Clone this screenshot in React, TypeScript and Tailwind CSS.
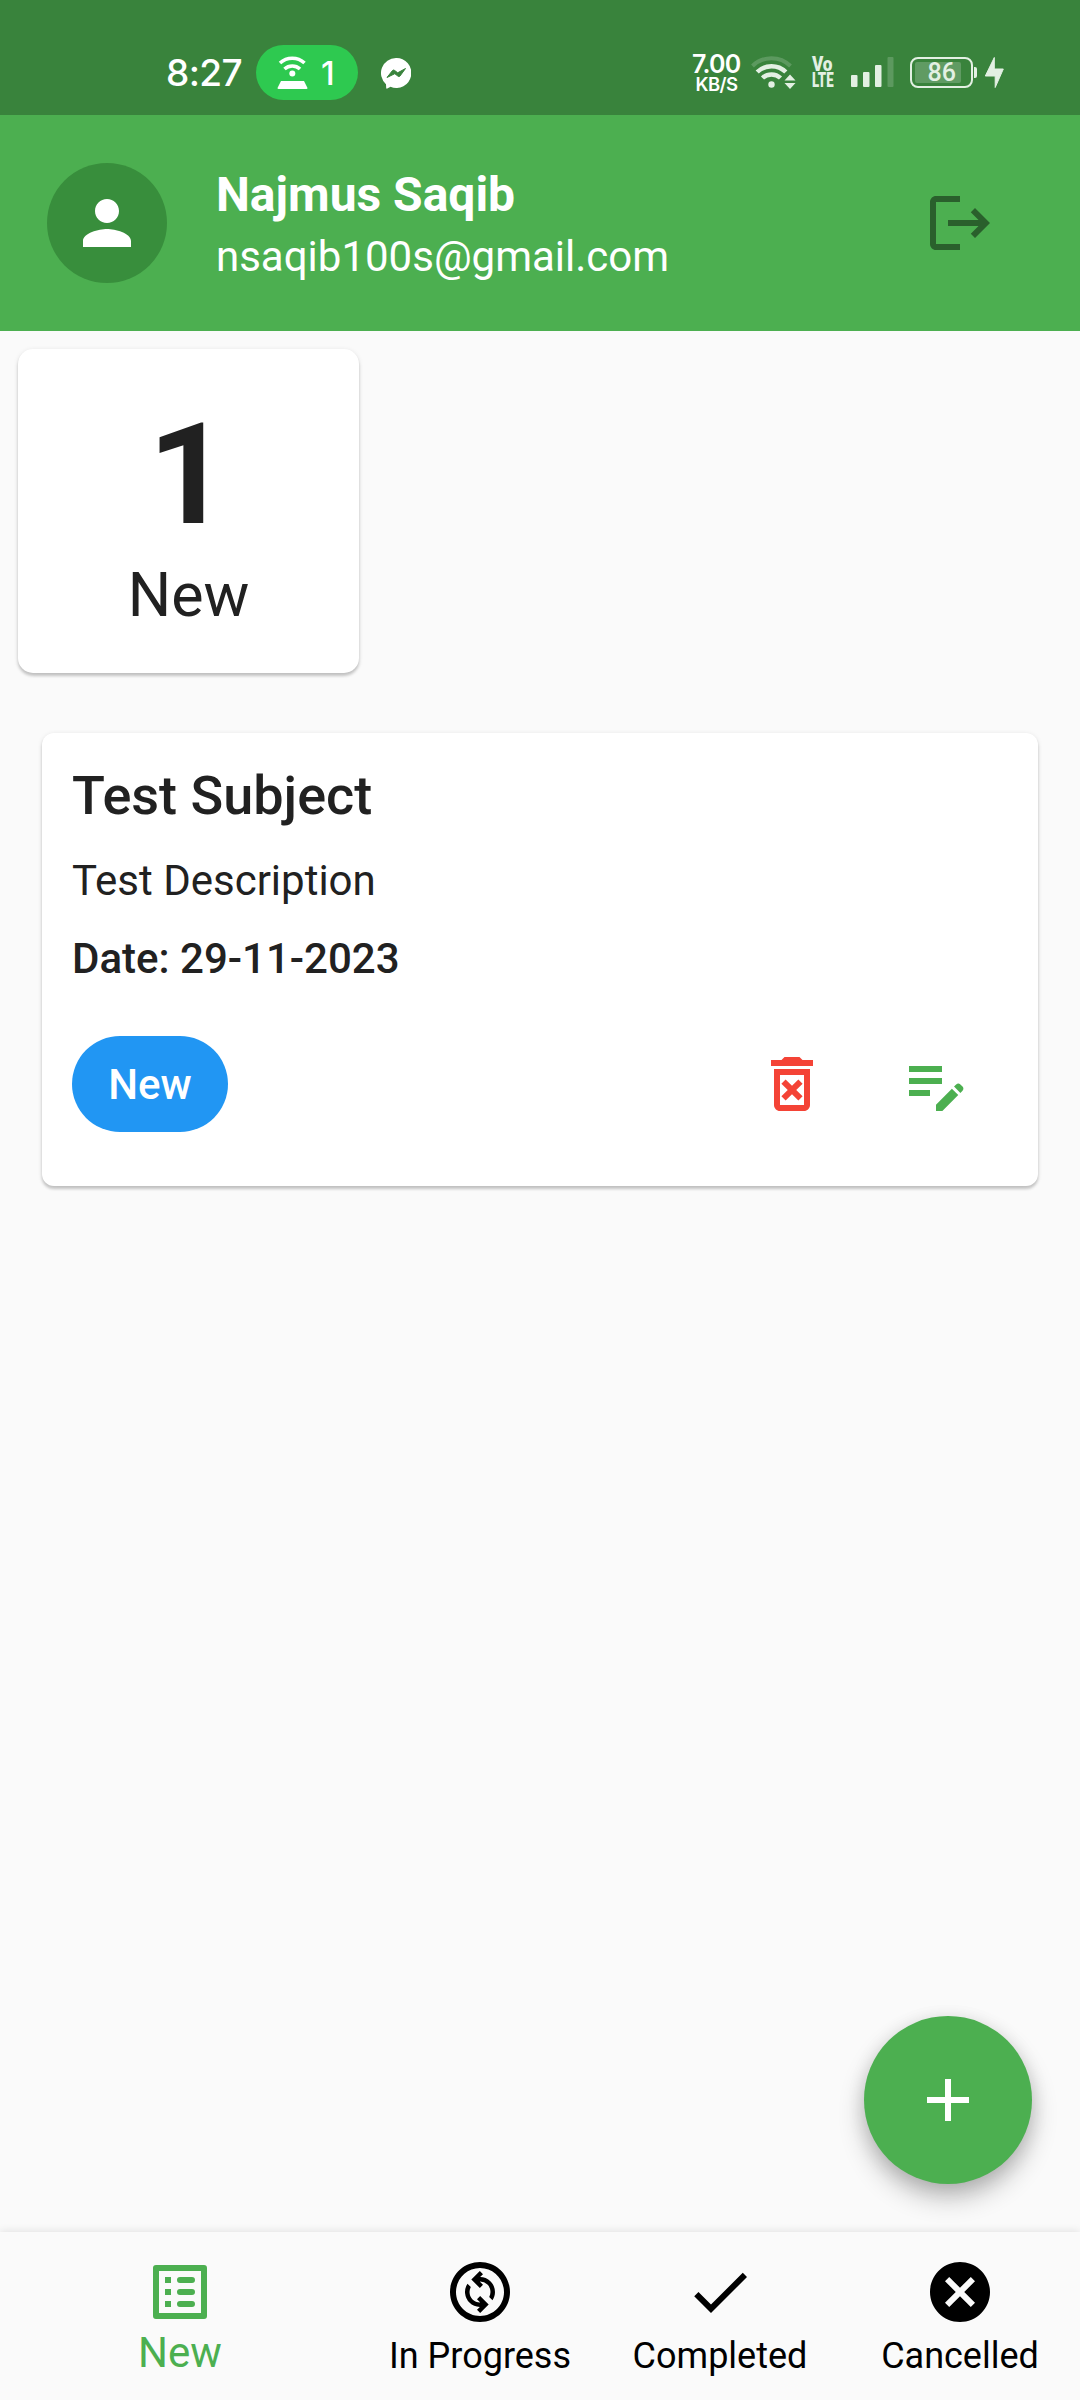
import type { ReactNode } from "react";
import {
  MdAdd,
  MdCancel,
  MdCheck,
  MdEditNote,
  MdLogout,
  MdOutlineChangeCircle,
  MdOutlineDeleteForever,
  MdPerson,
} from "react-icons/md";

function HotspotIcon() {
  return (
    <svg width="32" height="34" viewBox="0 0 32 34" fill="none" className="shrink-0">
      <path d="M3 8a18 18 0 0 1 24.500 0" stroke="white" strokeWidth="3.600" />
      <path d="M7.500 14a11.500 11.500 0 0 1 15.500 0" stroke="white" strokeWidth="3.600" />
      <circle cx="15.300" cy="18.500" r="3" fill="white" />
      <path d="M4 26h23l3.500 7a1 1 0 0 1-1 1h-28a1 1 0 0 1-1-1z" fill="white" />
    </svg>
  );
}

function MessengerIcon() {
  return (
    <svg width="30" height="31" viewBox="0 0 30 31" className="shrink-0">
      <path d="M15 0a15 15 0 1 1-5.500 28.800L6.300 30.600Q5.300 31 5.200 29.800L5 26.200A15 15 0 0 1 15 0z" fill="white" />
      <path d="M6 19.500l5.500-7q1-1 2.200 0l3 2.300L24.500 10.500l-5.500 7.500q-1 1-2.200 0l-3-2.300z" fill="#39833c" stroke="#39833c" strokeLinejoin="round" />
    </svg>
  );
}

function WifiIcon() {
  return (
    <svg width="45" height="34" viewBox="0 0 45 34" fill="none" className="shrink-0">
      <path d="M1.500 11a27 27 0 0 1 38 0" stroke="white" strokeOpacity=".18" strokeWidth="4" />
      <path d="M6.200 17a20.500 20.500 0 0 1 28.600 0" stroke="#e3f0e3" strokeWidth="4.500" />
      <path d="M11.500 23a13 13 0 0 1 18 0" stroke="#e3f0e3" strokeWidth="4.500" />
      <circle cx="20.500" cy="29.500" r="3.200" fill="#e3f0e3" />
      <path d="M39 19.500l5.500 6h-11zM39 34l5.500-6h-11z" fill="#e3f0e3" />
    </svg>
  );
}

function SignalIcon() {
  return (
    <svg width="43" height="30" viewBox="0 0 43 30" fill="#e3f0e3" className="shrink-0">
      <rect x="0" y="18" width="6.500" height="12" rx="1" />
      <rect x="12" y="15" width="6.500" height="15" rx="1" />
      <rect x="24" y="8" width="6.500" height="22" rx="1" />
      <rect x="36.500" y="0" width="6" height="30" rx="1" fill="white" fillOpacity=".18" />
    </svg>
  );
}

function Battery() {
  return (
    <div className="flex items-center">
      <div className="flex h-[31px] w-[63px] rounded-[8px] border-2 border-[#e3f0e3] p-[3px]">
        <div className="flex h-[21px] w-[46px] justify-end rounded-[2px] bg-white/20 pr-[5px] font-['Roboto',sans-serif] text-[25px] leading-[21px] font-medium text-[#e3f0e3]">
          86
        </div>
      </div>
      <div className="ml-px h-[11px] w-[3px] rounded-r-[2px] bg-[#e3f0e3]" />
      <svg width="19" height="31" viewBox="0 0 19 31" className="ml-[8px]">
        <path d="M9.300 0.500v11.500h9L10.200 30.500V19H.300z" fill="#e3f0e3" stroke="#e3f0e3" strokeLinejoin="round" />
      </svg>
    </div>
  );
}

function StatusBar() {
  return (
    <div className="flex h-[115px] shrink-0 items-start bg-[#39833c] text-white">
      <div className="mt-[50px] ml-[166px] w-[90px] font-['Inter',sans-serif] text-[37px] leading-[46px] font-[450] tracking-[-0.6px]">8:27</div>
      <div className="mt-[45px] flex h-[55px] w-[102px] items-start rounded-full bg-[#2ec950] pt-[10px] pl-[21px]">
        <HotspotIcon />
        <span className="mt-[-2px] ml-[12px] font-['Inter',sans-serif] text-[33px] leading-[40px] font-[450]">1</span>
      </div>
      <div className="mt-[58px] ml-[23px]">
        <MessengerIcon />
      </div>
      <div className="mt-[52px] ml-[281px] w-[48px] text-center font-['Inter',sans-serif] font-semibold">
        <div className="text-[25px] leading-[24px] tracking-[-0.8px]">7.00</div>
        <div className="pl-px text-[18.500px] leading-[16px] tracking-[-0.5px]">KB/S</div>
      </div>
      <div className="mt-[55px] ml-[11px]">
        <WifiIcon />
      </div>
      <div className="mt-[56px] ml-[16px] w-[24px] font-['Roboto',sans-serif] text-[20px] leading-[16px] font-black text-[#e3f0e3]">
        <div className="origin-left scale-x-[.86] tracking-[-0.3px]">Vo</div>
        <div className="origin-left scale-x-[.66]">LTE</div>
      </div>
      <div className="mt-[57px] ml-[15px]">
        <SignalIcon />
      </div>
      <div className="mt-[57px] ml-[16px]">
        <Battery />
      </div>
    </div>
  );
}

function ProfileHeader() {
  return (
    <header className="flex h-[216px] shrink-0 items-center bg-[#4caf50] pr-[84px] pl-[47px] text-white">
      <div className="flex size-[120px] items-center justify-center rounded-full bg-[#388e3c]">
        <MdPerson size={72} />
      </div>
      <div className="ml-[49px] pt-[6px]">
        <h1 className="text-[48px] leading-[60px] font-bold">Najmus Saqib</h1>
        <p className="mt-[2px] text-[42px] leading-[60px]">nsaqib100s@gmail.com</p>
      </div>
      <MdLogout size={72} className="ml-auto text-[#2a602c]" />
    </header>
  );
}

function SummaryCard({ count, label }: { count: number; label: string }) {
  return (
    <section className="mt-[18px] ml-[18px] h-[324px] w-[341px] rounded-[15px] bg-white pt-[42px] text-center shadow-[0_3px_3px_rgba(0,0,0,.18),0_1px_5px_rgba(0,0,0,.1)]">
      <div className="text-[141px] leading-[168px] font-bold">{count}</div>
      <div className="text-[61px] leading-[72px]">{label}</div>
    </section>
  );
}

function TaskCard() {
  return (
    <section className="mx-[42px] mt-[60px] h-[453px] rounded-[12px] bg-white pt-[31px] pr-[66px] pl-[30px] shadow-[0_3px_3px_rgba(0,0,0,.18),0_1px_5px_rgba(0,0,0,.1)]">
      <h2 className="text-[54px] leading-[64px] font-medium">Test Subject</h2>
      <p className="mt-[28px] text-[42px] leading-[50px]">Test Description</p>
      <p className="mt-[28px] text-[42px] leading-[50px] font-medium">Date: 29-11-2023</p>
      <div className="mt-[52px] flex items-center">
        <span className="flex h-[96px] w-[156px] items-center justify-center rounded-full bg-[#2196f3] text-[42px] font-medium text-white">New</span>
        <MdOutlineDeleteForever size={72} className="ml-auto text-[#f44336]" />
        <MdEditNote size={72} className="ml-[72px] text-[#4caf50]" />
      </div>
    </section>
  );
}

function ListIcon() {
  return (
    <svg width="72" height="72" viewBox="0 0 24 24" fill="currentColor">
      <path
        fillRule="evenodd"
        d="M4 3h16a1 1 0 0 1 1 1v16a1 1 0 0 1-1 1H4a1 1 0 0 1-1-1V4a1 1 0 0 1 1-1zm1 2v14h14V5zM7 7h2v2H7zM7 11h2v2H7zM7 15h2v2H7zM12 7h4a1 1 0 0 1 0 2h-4a1 1 0 0 1 0-2zM12 11h4a1 1 0 0 1 0 2h-4a1 1 0 0 1 0-2zM12 15h4a1 1 0 0 1 0 2h-4a1 1 0 0 1 0-2z"
      />
    </svg>
  );
}

function NavItem({ icon, label }: { icon: ReactNode; label: string }) {
  return (
    <div className="flex w-[240px] flex-col items-center pt-[24px]">
      {icon}
      <span className="mt-[7px] text-[36px] leading-[42px]">{label}</span>
    </div>
  );
}

function BottomNav() {
  return (
    <nav className="flex h-[168px] shrink-0 bg-[#fafafa] text-black shadow-[0_-1px_8px_rgba(0,0,0,.1)]">
      <div className="flex w-[360px] flex-col items-center pt-[24px] text-[#4caf50]">
        <ListIcon />
        <span className="text-[42px] leading-[50px]">New</span>
      </div>
      <NavItem icon={<MdOutlineChangeCircle size={72} />} label="In Progress" />
      <NavItem icon={<MdCheck size={72} />} label="Completed" />
      <NavItem icon={<MdCancel size={72} />} label="Cancelled" />
    </nav>
  );
}

export default function App() {
  return (
    <div className="relative flex h-[2400px] w-[1080px] flex-col overflow-hidden bg-[#fafafa] font-['Roboto',sans-serif] text-[#212121]">
      <StatusBar />
      <ProfileHeader />
      <main className="flex-1">
        <SummaryCard count={1} label="New" />
        <TaskCard />
      </main>
      <button
        aria-label="Add task"
        className="absolute right-[48px] bottom-[216px] flex size-[168px] items-center justify-center rounded-full bg-[#4caf50] text-white shadow-[0_14px_26px_rgba(0,0,0,.24),0_4px_18px_rgba(0,0,0,.12)]"
      >
        <MdAdd size={72} />
      </button>
      <BottomNav />
    </div>
  );
}
